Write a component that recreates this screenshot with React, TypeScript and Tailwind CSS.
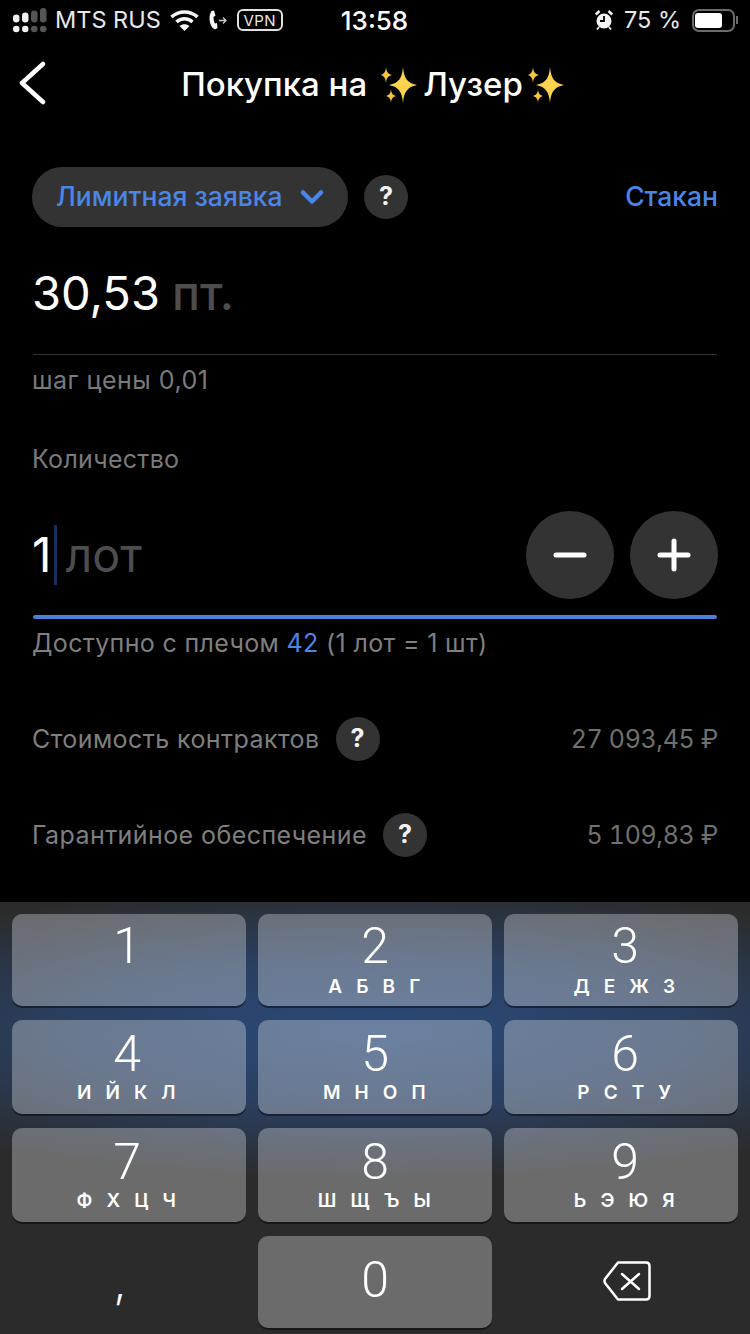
import React from "react";
import { ChevronDown, Plus, Minus } from "lucide-react";

const keys = [
  { digit: "1", letters: "", col: "pr-1", top: "mt-[6px] mb-[4px]" },
  { digit: "2", letters: "А Б В Г", col: "", top: "mt-[6px] mb-[4px]" },
  { digit: "3", letters: "Д Е Ж З", col: "pl-2", top: "mt-[6px] mb-[4px]" },
  { digit: "4", letters: "И Й К Л", col: "pr-1", top: "mt-[8px] mb-[2px]" },
  { digit: "5", letters: "М Н О П", col: "", top: "mt-[8px] mb-[2px]" },
  { digit: "6", letters: "Р С Т У", col: "pl-2", top: "mt-[8px] mb-[2px]" },
  { digit: "7", letters: "Ф Х Ц Ч", col: "pr-1", top: "mt-[8px] mb-[2px]" },
  { digit: "8", letters: "Ш Щ Ъ Ы", col: "", top: "mt-[8px] mb-[2px]" },
  { digit: "9", letters: "Ь Э Ю Я", col: "pl-2", top: "mt-[8px] mb-[2px]" },
];

const Sparkles = () => (
  <svg width="37" height="36" viewBox="0 0 37 36" className="shrink-0">
    <path d="M22 0 C23 11 26 16 36 18 C26 20 23 25 22 36 C21 25 18 20 8 18 C18 16 21 11 22 0Z" fill="#fcd34d" />
    <path d="M5 0 C5.500 5 7 7 11 8 C7 9 5.500 11 5 16 C4.500 11 3 9 0 8 C3 7 4.500 5 5 0Z" fill="#f5c53c" />
    <path d="M10 22 C10.400 26 11.500 28 15 29 C11.500 30 10.400 32 10 36 C9.600 32 8.500 30 5 29 C8.500 28 9.600 26 10 22Z" fill="#f5c53c" />
  </svg>
);

const HelpButton = () => (
  <div className="w-11 h-11 rounded-full bg-[#333333] flex items-center justify-center text-[25px] font-bold text-[#f2f2f2] shrink-0">
    ?
  </div>
);

const RoundButton = ({ children }: { children: React.ReactNode }) => (
  <div className="w-[88px] h-[88px] rounded-full bg-[#333333] flex items-center justify-center text-white">
    {children}
  </div>
);

const StatusBar = () => (
  <div className="h-10 pl-[13px] pr-[12px] flex items-center text-[23.500px] text-[#e8e8e8]">
    <div className="flex-1 flex items-center min-w-0">
      <svg width="34" height="25" viewBox="0 0 34 25" className="shrink-0">
        <rect x="0" y="6.500" width="6.500" height="8" rx="3.250" fill="#f2f2f2" />
        <rect x="9" y="4.500" width="6.500" height="10" rx="3.250" fill="#f2f2f2" />
        <rect x="18" y="2.500" width="6.500" height="12" rx="3.250" fill="#555555" />
        <rect x="27" y="0" width="6.500" height="14.500" rx="3.250" fill="#555555" />
        <circle cx="3.250" cy="21" r="3.250" fill="#f2f2f2" />
        <circle cx="12.250" cy="21" r="3.250" fill="#f2f2f2" />
        <circle cx="21.250" cy="21" r="3.250" fill="#555555" />
        <circle cx="30.250" cy="21" r="3.250" fill="#555555" />
      </svg>
      <span className="ml-[8px] whitespace-nowrap">MTS RUS</span>
      <svg width="29" height="22" viewBox="0 0 29 22" className="ml-[9px] shrink-0" fill="none" stroke="#f5f5f5" strokeWidth="3.500">
        <path d="M1.500 8 C8.500 1.200 20.500 1.200 27.500 8" />
        <path d="M6.500 13 C11 8.800 18 8.800 22.500 13" />
        <path d="M14.500 22 L9.500 17 C12.500 14.500 16.500 14.500 19.500 17 Z" fill="#f5f5f5" stroke="none" />
      </svg>
      <svg width="18" height="20" viewBox="0 0 18 20" className="ml-[10px] shrink-0" fill="none">
        <path d="M2.500 1 L5 0.500 L6.500 5.500 L4.500 7 C4.500 10 5 12 6 13.500 L8 13 L8.500 18 L6 19.500 C1 17.500 -1.500 7 2.500 1Z" fill="#f5f5f5" />
        <path d="M10 10.500 H17 M14 7.500 L17 10.500 L14 13.500" stroke="#cfcfcf" strokeWidth="1.300" />
      </svg>
      <div className="ml-[10px] w-[46px] h-[22px] border-2 border-[#e0e0e0] rounded-[6px] flex items-center justify-center text-[15px] tracking-[0.5px] leading-none text-[#e8e8e8] shrink-0">
        VPN
      </div>
    </div>
    <div className="text-[26px] font-medium text-white pr-[2px]">13:58</div>
    <div className="flex-1 flex items-center justify-end">
      <svg width="18" height="20" viewBox="0 0 18 20" className="shrink-0">
        <circle cx="9" cy="11" r="7.500" fill="#f2f2f2" />
        <path d="M9 6 V11 H5" stroke="#000" strokeWidth="1.800" fill="none" />
        <path d="M0.800 4.500 L4.500 1 M17.200 4.500 L13.500 1" stroke="#f2f2f2" strokeWidth="2.500" />
        <path d="M4 17 L2 19.500 M14 17 L16 19.500" stroke="#f2f2f2" strokeWidth="1.800" />
      </svg>
      <span className="ml-[11px] whitespace-nowrap">75 %</span>
      <div className="ml-[11px] flex items-center">
        <div className="w-[43px] h-[23px] border-2 border-[#6b6b6b] rounded-[7px] py-[2px] px-[1px]">
          <div className="w-[27px] h-full bg-white rounded-[3px]" />
        </div>
        <div className="w-[2px] h-2 bg-[#6b6b6b] ml-[1px]" />
      </div>
    </div>
  </div>
);

const Row = ({ label, value }: { label: string; value: string }) => (
  <div className="flex items-center h-11">
    <span className="text-[25px] tracking-[0.42px] text-[#7f7f7f] pt-px">{label}</span>
    <div className="ml-4">
      <HelpButton />
    </div>
    <span className="ml-auto text-[25px] tracking-[-0.35px] tabular-nums text-[#707070] pt-px">{value}</span>
  </div>
);

export default function App() {
  return (
    <div className="w-[750px] h-[1334px] bg-black flex flex-col overflow-hidden font-['Inter',sans-serif]">
      <StatusBar />

      <div className="h-[90px] pl-[16px] flex items-center relative">
        <svg width="32" height="44" viewBox="0 0 32 44" fill="none" stroke="#ffffff" strokeWidth="4.500" strokeLinecap="round" strokeLinejoin="round" className="-mt-[4px]">
          <path d="M27 3 L6 22 L27 41" />
        </svg>
        <div className="absolute inset-0 flex items-center justify-center text-[33px] font-medium text-white pr-[4px]">
          <span>Покупка на</span>
          <span className="ml-[14px]"><Sparkles /></span>
          <span className="ml-[5px]">Лузер</span>
          <span className="ml-[5px]"><Sparkles /></span>
        </div>
      </div>

      <div className="px-8 flex-1 flex flex-col min-h-0">
        <div className="mt-[37px] flex items-center">
          <div className="w-[316px] h-[60px] rounded-[30px] bg-[#333333] flex items-center pl-6 text-[#4a86e8] text-[26.500px] font-medium">
            <span>Лимитная заявка</span>
            <ChevronDown size={36} strokeWidth={3} className="ml-[11px]" />
          </div>
          <div className="ml-4">
            <HelpButton />
          </div>
          <span className="ml-auto text-[26.500px] font-medium text-[#4a86e8]">Стакан</span>
        </div>

        <div className="mt-[34px] h-[62px] flex items-center text-[47px] leading-none">
          <span className="text-white">30,53</span>
          <span className="ml-[12px] text-[#4d4d4d] font-medium">пт.</span>
        </div>
        <div className="mt-[31px] mx-px h-px bg-[#303030]" />
        <div className="mt-[10px] text-[25px] tracking-[0.5px] leading-[30px] text-[#7a7a7a]">шаг цены 0,01</div>
        <div className="mt-[49px] text-[25px] tracking-[0.3px] leading-[30px] text-[#7a7a7a]">Количество</div>

        <div className="mt-[37px] flex items-center h-[88px]">
          <span className="text-[48px] text-white">1</span>
          <div className="w-[3px] h-[60px] bg-[#16305c] ml-[2px]" />
          <span className="ml-[9px] mt-[2px] text-[46.500px] text-[#4d4d4d]">лот</span>
          <div className="ml-auto flex gap-4">
            <RoundButton>
              <Minus size={48} strokeWidth={2.500} />
            </RoundButton>
            <RoundButton>
              <Plus size={48} strokeWidth={2.500} />
            </RoundButton>
          </div>
        </div>

        <div className="mt-4 mx-px h-1 rounded-full bg-[#4a7fdc]" />
        <div className="mt-[9px] text-[25px] tracking-[0.35px] leading-[30px] text-[#7f7f7f]">
          Доступно с плечом <span className="text-[#4a86e8]">42</span> (1 лот = 1 шт)
        </div>

        <div className="mt-[59px] flex flex-col gap-[52px]">
          <Row label="Стоимость контрактов" value="27 093,45 ₽" />
          <Row label="Гарантийное обеспечение" value="5 109,83 ₽" />
        </div>
      </div>

      <div className="h-[432px] shrink-0 px-3 pt-3 bg-[#2b2b2b] bg-[radial-gradient(ellipse_620px_150px_at_50%_130px,#2b4a78_0%,#2a3f60_50%,#2b2b2b_100%)] grid grid-cols-3 grid-rows-[92px_94px_94px_92px] gap-x-3 gap-y-[14px]">
        {keys.map((k) => (
          <div key={k.digit} className={`rounded-[10px] bg-white/30 shadow-[0_2px_0_rgba(0,0,0,0.45)] flex flex-col items-center text-white ${k.col}`}>
            <div className={`h-[52px] text-[50px] font-['Roboto',sans-serif] font-light leading-[52px] ${k.top}`}>{k.digit}</div>
            <div className="text-[19px] font-semibold leading-[22px] tracking-[1.500px] whitespace-pre">
              {k.letters.split(" ").join("  ")}
            </div>
          </div>
        ))}
        <div className="flex items-center justify-center text-white text-[44px] font-light pr-[18px]">,</div>
        <div className="rounded-[10px] bg-white/30 shadow-[0_2px_0_rgba(0,0,0,0.45)] flex items-center justify-center text-white">
          <div className="text-[50px] font-['Roboto',sans-serif] font-light leading-[52px] mt-[-4px]">0</div>
        </div>
        <div className="flex items-center justify-center pl-3 pb-[2px]">
          <svg width="48" height="40" viewBox="0 0 48 40" fill="none" stroke="#ffffff" strokeWidth="2.500" strokeLinejoin="round" strokeLinecap="round">
            <path d="M15 1.500 H43 Q46.500 1.500 46.500 5 V35 Q46.500 38.500 43 38.500 H15 L2 22 Q1 20 2 18 Z" />
            <path d="M19 13 L36 28 M36 13 L19 28" />
          </svg>
        </div>
      </div>
    </div>
  );
}
